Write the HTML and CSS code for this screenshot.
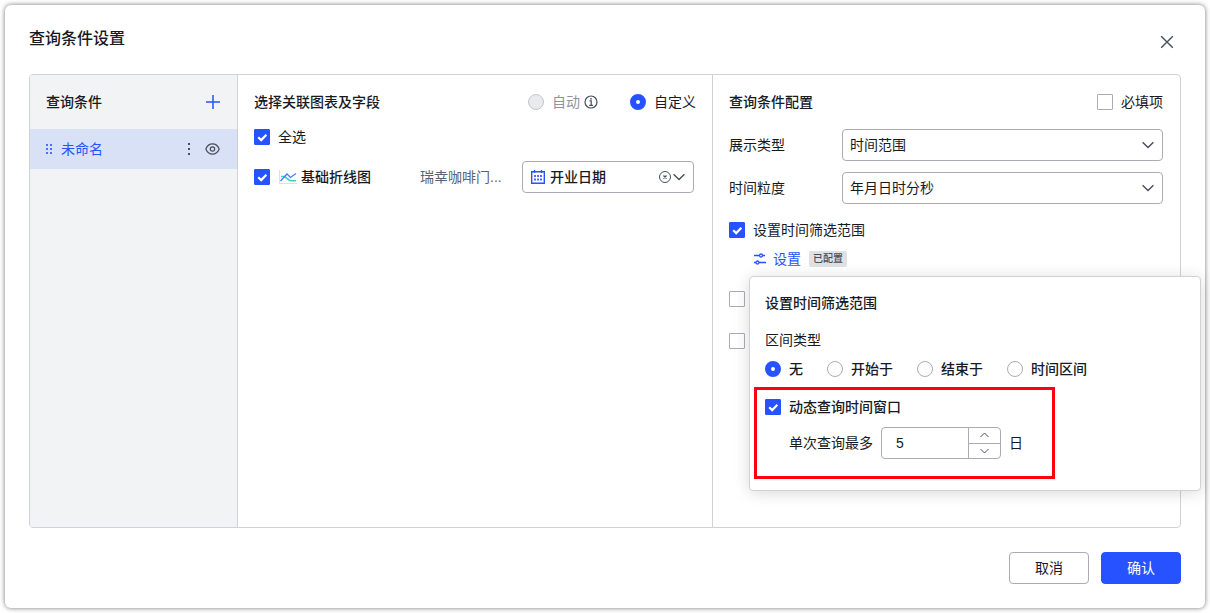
FILE: index.html
```html
<!DOCTYPE html>
<html lang="zh-CN">
<head>
<meta charset="utf-8">
<meta name="viewport" content="width=device-width, initial-scale=1">
<title>查询条件设置</title>
<link rel="stylesheet" href="styles.css">
</head>
<body>
<main class="dialog" role="dialog" aria-labelledby="dialog-title">
  <header class="dialog-header">
    <h1 class="dialog-title" id="dialog-title">查询条件设置</h1>
    <button class="icon-button close-button" type="button" aria-label="关闭">
      <svg width="14" height="14" viewBox="0 0 14 14"><path d="M1.2 1.2l11.6 11.6M12.8 1.2L1.2 12.8"/></svg>
    </button>
  </header>

  <div class="panel">
    <nav class="sidebar">
      <div class="sidebar-header">
        <h2 class="section-title">查询条件</h2>
        <button class="icon-button add-button" type="button" aria-label="添加">
          <svg width="14" height="14" viewBox="0 0 14 14"><path d="M7 0v14M0 7h14"/></svg>
        </button>
      </div>
      <div class="condition">
        <svg class="drag" width="7" height="12" viewBox="0 0 7 12"><path d="M0 1h2v2H0zM4 1h2v2H4zM0 5h2v2H0zM4 5h2v2H4zM0 9h2v2H0zM4 9h2v2H4z"/></svg>
        <a class="condition-name" href="#">未命名</a>
        <button class="icon-button more-button" type="button" aria-label="更多">
          <svg width="2" height="12" viewBox="0 0 2 12"><path d="M0 0h2v2H0zM0 5h2v2H0zM0 10h2v2H0z"/></svg>
        </button>
        <button class="icon-button eye-button" type="button" aria-label="显示">
          <svg width="15" height="12" viewBox="0 0 15 12"><path d="M.8 6C2.200 2.600 4.600 .9 7.500 .9S12.800 2.600 14.200 6C12.800 9.400 10.400 11.100 7.500 11.100S2.200 9.400 .8 6z"/><circle cx="7.500" cy="6" r="2.200"/></svg>
        </button>
      </div>
    </nav>

    <section class="fields">
      <div class="section-header">
        <h2 class="section-title">选择关联图表及字段</h2>
        <div class="mode">
          <span class="mode-auto">
            <label class="choice choice-disabled"><input class="radio" type="radio" name="mode" disabled>自动</label>
            <svg class="info" width="14" height="14" viewBox="0 0 14 14"><circle cx="7" cy="7" r="6"/><path d="M5.500 5.800H7.200v4.700M5.200 10.300h3.800M6.200 3.800h1.700"/></svg>
          </span>
          <label class="choice"><input class="radio" type="radio" name="mode" checked>自定义</label>
        </div>
      </div>
      <label class="choice select-all"><input class="checkbox" type="checkbox" checked>全选</label>
      <div class="field-row">
        <label class="choice chart">
          <input class="checkbox" type="checkbox" checked>
          <span class="chart-name">
            <svg width="18" height="14" viewBox="0 0 18 14"><path d="M.5 0v13.500H18" stroke="#dcdfe3"/><path d="M2 6.500h3.500L10 10l2 .8h5" stroke="#34d6bd" stroke-width="1.600"/><path d="M1.500 11L8 4l3.500 3.500L17 3.500" stroke="#4b79ff" stroke-width="1.300"/></svg>
            基础折线图
          </span>
        </label>
        <span class="dataset">瑞幸咖啡门...</span>
        <div class="select-box date-field">
          <svg class="calendar" width="14" height="14" viewBox="0 0 14 14"><path class="calendar-frame" d="M.7 1.700h12.600v11.600H.7zM3.500 0v3M10.500 0v3"/><path class="calendar-dots" d="M3 5h2v2H3zM6 5h2v2H6zM9 5h2v2H9zM3 8.500h2v2H3zM6 8.500h2v2H6zM9 8.500h2v2H9z"/></svg>
          <select class="select" aria-label="字段"><option>开业日期</option></select>
          <button class="icon-button clear-button" type="button" aria-label="清除">
            <svg width="12" height="12" viewBox="0 0 12 12"><circle cx="6" cy="6" r="5.500"/><path d="M4.500 4.500l3 3M7.500 4.500l-3 3" stroke-width="1.200"/></svg>
          </button>
          <svg class="chevron" width="12" height="8" viewBox="0 0 12 8"><path d="M.6 1.200L6 6.600l5.400-5.400"/></svg>
        </div>
      </div>
    </section>

    <section class="config">
      <div class="section-header">
        <h2 class="section-title">查询条件配置</h2>
        <label class="choice"><input class="checkbox" type="checkbox">必填项</label>
      </div>
      <div class="form-row">
        <label class="form-label" for="display-type">展示类型</label>
        <div class="select-box">
          <select class="select" id="display-type"><option>时间范围</option></select>
          <svg class="chevron" width="12" height="8" viewBox="0 0 12 8"><path d="M.6 1.200L6 6.600l5.400-5.400"/></svg>
        </div>
      </div>
      <div class="form-row">
        <label class="form-label" for="granularity">时间粒度</label>
        <div class="select-box">
          <select class="select" id="granularity"><option>年月日时分秒</option></select>
          <svg class="chevron" width="12" height="8" viewBox="0 0 12 8"><path d="M.6 1.200L6 6.600l5.400-5.400"/></svg>
        </div>
      </div>
      <label class="choice range-toggle"><input class="checkbox" type="checkbox" checked>设置时间筛选范围</label>
      <div class="range-settings">
        <button class="link-button" type="button">
          <svg width="14" height="12" viewBox="0 0 14 12"><path d="M1 2.500h5.500M9.500 2.500H12M1 9.500h2M6 9.500h7"/><circle cx="8" cy="2.500" r="1.500"/><circle cx="4.500" cy="9.500" r="1.500"/></svg>
          设置
        </button>
        <span class="tag">已配置</span>

        <div class="popover" role="dialog" aria-labelledby="popover-title">
          <h3 class="section-title popover-title" id="popover-title">设置时间筛选范围</h3>
          <div class="popover-label" id="interval-label">区间类型</div>
          <div class="interval" role="radiogroup" aria-labelledby="interval-label">
            <label class="choice choice-strong"><input class="radio" type="radio" name="interval" checked>无</label>
            <label class="choice choice-strong"><input class="radio" type="radio" name="interval">开始于</label>
            <label class="choice choice-strong"><input class="radio" type="radio" name="interval">结束于</label>
            <label class="choice choice-strong"><input class="radio" type="radio" name="interval">时间区间</label>
          </div>
          <div class="window-limit">
            <label class="choice choice-strong"><input class="checkbox" type="checkbox" checked>动态查询时间窗口</label>
            <div class="limit-row">
              <label for="limit">单次查询最多</label>
              <div class="stepper">
                <input class="stepper-input" id="limit" type="number" value="5">
                <div class="stepper-buttons">
                  <button class="stepper-button" type="button" aria-label="增加"><svg width="9" height="6" viewBox="0 0 9 6"><path d="M.5 5l4-4 4 4"/></svg></button>
                  <button class="stepper-button" type="button" aria-label="减少"><svg width="9" height="6" viewBox="0 0 9 6"><path d="M.5 1l4 4 4-4"/></svg></button>
                </div>
              </div>
              <span>日</span>
            </div>
          </div>
        </div>
      </div>
      <div class="extra-options">
        <input class="checkbox" type="checkbox" aria-label="选项一">
        <input class="checkbox" type="checkbox" aria-label="选项二">
      </div>
    </section>
  </div>

  <footer class="dialog-footer">
    <button class="button" type="button">取消</button>
    <button class="button button-primary" type="button">确认</button>
  </footer>
</main>
</body>
</html>
```

FILE: styles.css
```css
:root {
  --blue: #2653ff;
  --text: #171a1f;
  --icon: #484e5a;
  --line: #d0d2d5;
  --control-line: #a9acb7;
}

* {
  box-sizing: border-box;
}

body {
  margin: 0;
  padding: 5px;
  background: #fff;
  color: var(--text);
  font-family: "Liberation Sans", "Noto Sans CJK SC", sans-serif;
  font-size: 14px;
  line-height: 22px;
}

button,
input,
select {
  margin: 0;
  color: inherit;
  font: inherit;
}

svg {
  display: block;
  flex: none;
  fill: none;
  stroke: currentColor;
}

.dialog {
  display: flex;
  flex-direction: column;
  min-height: calc(100vh - 10px);
  padding: 22px 24px 24px;
  border-radius: 6px;
  background: #fff;
  box-shadow: 0 0 5px rgba(0, 0, 0, 0.55);
}

.dialog-header {
  display: flex;
  justify-content: space-between;
  align-items: flex-start;
  height: 47px;
}

.dialog-title {
  margin: 0;
  font-size: 16px;
  font-weight: 500;
  line-height: 24px;
}

.icon-button {
  display: flex;
  align-items: center;
  justify-content: center;
  flex: none;
  padding: 0;
  border: 0;
  background: none;
  color: var(--icon);
  cursor: pointer;
}

.close-button {
  width: 28px;
  height: 30px;
  stroke-width: 1.4;
}

.panel {
  display: flex;
  flex: 1;
  border: 1px solid var(--line);
  border-radius: 4px;
}

.section-title {
  margin: 0;
  font-size: 14px;
  font-weight: 500;
  line-height: 22px;
}

.section-header {
  display: flex;
  justify-content: space-between;
  align-items: center;
}

/* Condition list */

.sidebar {
  flex: none;
  width: 208px;
  border-right: 1px solid var(--line);
  border-radius: 3px 0 0 3px;
  background: #f2f3f5;
}

.sidebar-header {
  display: flex;
  justify-content: space-between;
  align-items: center;
  height: 54px;
  padding: 0 17px 0 16px;
}

.add-button {
  color: var(--blue);
  stroke-width: 1.5;
}

.condition {
  display: flex;
  align-items: center;
  height: 40px;
  padding: 0 17px 0 16px;
  background: #d9e1f6;
}

.drag {
  margin-right: 8px;
  fill: var(--blue);
  opacity: 0.8;
  stroke: none;
}

.condition-name {
  flex: 1;
  color: var(--blue);
  text-decoration: none;
}

.more-button svg {
  fill: currentColor;
  stroke: none;
}

.eye-button {
  margin-left: 15px;
  stroke-width: 1.2;
}

/* Charts and fields */

.fields {
  flex: none;
  width: 475px;
  padding: 16px;
  border-right: 1px solid var(--line);
}

.choice {
  display: flex;
  align-items: center;
  gap: 8px;
}

.choice-strong {
  font-weight: 500;
}

.choice-disabled {
  color: #8f939c;
}

.mode {
  display: flex;
  gap: 32px;
}

.mode-auto {
  display: flex;
  align-items: center;
  gap: 4px;
}

.info {
  color: var(--icon);
  stroke-width: 1.2;
}

.select-all {
  margin-top: 13px;
}

.field-row {
  display: flex;
  align-items: center;
  margin-top: 13px;
  padding-right: 2px;
}

.chart {
  flex: 1;
}

.chart-name {
  display: flex;
  align-items: center;
  gap: 4px;
  margin-left: 1px;
  font-weight: 500;
}

.dataset {
  width: 102px;
  color: #5b616d;
}

.checkbox,
.radio {
  flex: none;
  width: 16px;
  height: 16px;
  border: 1px solid var(--control-line);
  background: #fff;
  appearance: none;
}

.checkbox {
  border-radius: 1px;
}

.radio {
  border-radius: 50%;
}

.radio:disabled {
  border-color: #c3c5cb;
  background: #e9eaec;
}

.checkbox:checked {
  border-color: var(--blue);
  background: var(--blue) url("data:image/svg+xml,%3Csvg xmlns='http://www.w3.org/2000/svg' viewBox='0 0 14 14'%3E%3Cpath d='M3.200 7.200l3 2.900 5.200-5.300' fill='none' stroke='white' stroke-width='2.200'/%3E%3C/svg%3E") center / 14px 14px no-repeat;
}

.radio:checked {
  border: 6px solid var(--blue);
}

.select-box {
  display: flex;
  align-items: center;
  flex: 1;
  height: 32px;
  padding: 0 8px 0 7px;
  border: 1px solid var(--control-line);
  border-radius: 4px;
  background: #fff;
}

.select {
  flex: 1;
  min-width: 0;
  height: 30px;
  padding: 0;
  border: 0;
  outline: 0;
  background: none;
  appearance: none;
}

.chevron {
  color: var(--icon);
  stroke-width: 1.4;
  pointer-events: none;
}

.date-field {
  flex: none;
  width: 172px;
  padding-left: 8px;
  font-weight: 500;
}

.calendar {
  margin-right: 5px;
  color: var(--blue);
}

.calendar-frame {
  stroke-width: 1.4;
}

.calendar-dots {
  fill: currentColor;
  opacity: 0.85;
  stroke: none;
}

.clear-button {
  margin-right: 2px;
}

/* Condition settings */

.config {
  flex: 1;
  padding: 16px 17px 16px 16px;
}

.form-row {
  display: flex;
  align-items: center;
  margin-top: 11px;
}

.section-header + .form-row {
  margin-top: 16px;
}

.form-label {
  width: 113px;
}

.range-toggle {
  margin-top: 15px;
}

.range-settings {
  position: relative;
  display: flex;
  align-items: center;
  gap: 8px;
  margin: 7px 0 0 24px;
}

.link-button {
  display: flex;
  align-items: center;
  gap: 6px;
  padding: 0;
  border: 0;
  background: none;
  color: var(--blue);
  cursor: pointer;
}

.link-button svg {
  stroke-width: 1.3;
}

.tag {
  padding: 0 4px;
  border-radius: 2px;
  background: #dfe2e2;
  color: #484e58;
  font-size: 10px;
  font-weight: 500;
  line-height: 16px;
}

.extra-options {
  display: flex;
  flex-direction: column;
  gap: 26px;
  margin-top: 21px;
}

/* Time range popover */

.popover {
  position: absolute;
  top: 28px;
  left: -4px;
  width: 452px;
  padding: 15px 4px 11px;
  border: 1px solid var(--line);
  border-radius: 4px;
  background: #fff;
  box-shadow: 0 2px 16px rgba(0, 0, 0, 0.15);
}

.popover-title,
.popover-label,
.interval {
  padding: 0 11px;
}

.popover-label {
  margin-top: 15px;
}

.interval {
  display: flex;
  gap: 24px;
  margin-top: 7px;
}

.window-limit {
  width: 301px;
  margin-top: 7px;
  padding: 6px 8px 17px;
  border: 3px solid #ff0010;
}

.limit-row {
  display: flex;
  align-items: center;
  gap: 8px;
  margin-top: 9px;
  padding-left: 24px;
}

.stepper {
  display: flex;
  width: 120px;
  height: 32px;
  border: 1px solid var(--control-line);
  border-radius: 4px;
}

.stepper-input {
  flex: 1;
  min-width: 0;
  padding: 0 14px;
  border: 0;
  outline: 0;
  background: none;
  appearance: textfield;
}

.stepper-input::-webkit-inner-spin-button {
  appearance: none;
}

.stepper-buttons {
  display: flex;
  flex-direction: column;
  width: 32px;
  border-left: 1px solid var(--control-line);
}

.stepper-button {
  display: flex;
  align-items: center;
  justify-content: center;
  flex: 1;
  padding: 0;
  border: 0;
  background: none;
  color: var(--icon);
}

.stepper-button + .stepper-button {
  border-top: 1px solid var(--control-line);
}

/* Footer */

.dialog-footer {
  display: flex;
  justify-content: flex-end;
  gap: 12px;
  padding-top: 24px;
}

.button {
  width: 80px;
  height: 32px;
  padding: 0;
  border: 1px solid var(--control-line);
  border-radius: 4px;
  background: #fff;
  cursor: pointer;
}

.button-primary {
  border-color: var(--blue);
  background: var(--blue);
  color: #fff;
}
```
